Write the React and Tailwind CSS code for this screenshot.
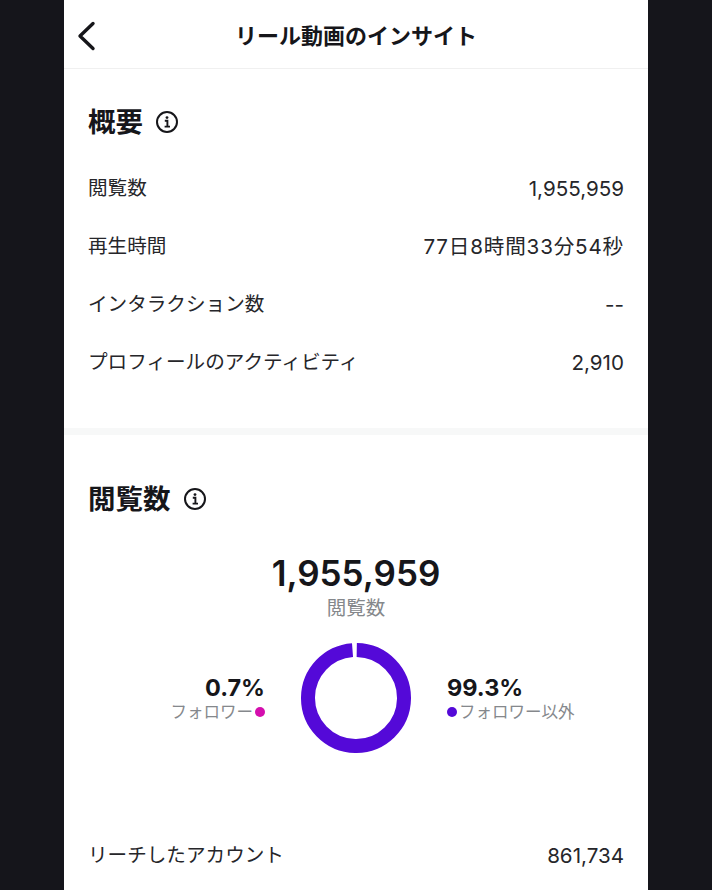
const OVERVIEW_ROWS = [
  ['閲覧数', '1,955,959', ''],
  ['再生時間', '77日8時間33分54秒', 'tracking-[0.04em]'],
  ['インタラクション数', '--', ''],
  ['プロフィールのアクティビティ', '2,910', ''],
];

function InfoIcon() {
  return (
    <svg width="24" height="24" viewBox="0 0 24 24" fill="none" stroke="#16161a" className="shrink-0">
      <circle cx="12" cy="12" r="10" strokeWidth="2" />
      <circle cx="12" cy="7.6" r="1.4" fill="#16161a" stroke="none" />
      <path d="M9.8 10.8H12.4V16.4M9.6 16.6H15" strokeWidth="1.9" />
    </svg>
  );
}

function Donut() {
  // 円周 = 2 * PI * 48 = 301.6, leaves a small gap at the top
  return (
    <svg width="110" height="110" viewBox="0 0 110 110" className="block">
      <circle
        cx="55"
        cy="55"
        r="48"
        fill="none"
        stroke="#5409d8"
        strokeWidth="14"
        strokeDasharray="296.8 4.8"
        transform="rotate(-89.1 55 55)"
      />
    </svg>
  );
}

export default function App() {
  return (
    <div
      className="h-[890px] w-[712px] overflow-hidden bg-[#15151b] px-16 text-[#16161a]"
      style={{ fontFamily: 'Inter, "Noto Sans CJK JP", sans-serif' }}
    >
      <div className="h-full bg-white">
        {/* Header */}
        <div className="relative flex h-[69px] items-center justify-center border-b border-[#f0f0f0]">
          <svg width="22" height="32" viewBox="0 0 22 32" fill="none" className="absolute left-[12px] top-[20px]">
            <path d="M17 3.5L4 16L17 28.5" stroke="#16161a" strokeWidth="3.4" strokeLinecap="round" strokeLinejoin="round" />
          </svg>
          <span className="mt-[3px] text-[22px] font-bold leading-[30px]">リール動画のインサイト</span>
        </div>

        {/* 概要 */}
        <div className="h-[359px] px-6 pt-[33px]">
          <div className="flex h-10 items-center gap-[12px]">
            <h2 className="text-[27.5px] font-bold leading-10">概要</h2>
            <InfoIcon />
          </div>
          <div className="mt-[18px] flex flex-col">
            {OVERVIEW_ROWS.map(([label, value, extra]) => (
              <div key={label} className="flex h-[58px] items-center justify-between text-[#26262a]">
                <span className="text-[19.6px]">{label}</span>
                <span className={`text-[20.6px] ${extra}`}>{value}</span>
              </div>
            ))}
          </div>
        </div>
        <div className="h-[7px] bg-[#f7f8f8]" />

        {/* 閲覧数 */}
        <div className="px-6 pt-[44px]">
          <div className="flex h-10 items-center gap-[12px]">
            <h2 className="text-[27.5px] font-bold leading-10">閲覧数</h2>
            <InfoIcon />
          </div>
          <div className="mt-[34px] flex flex-col items-center">
            <div className="text-[35px] font-semibold leading-10">1,955,959</div>
            <div className="mt-[2px] text-[19.5px] leading-[26px] text-[#85888c]">閲覧数</div>
          </div>
          <div className="mt-[22px] grid grid-cols-[1fr_auto_1fr] items-center gap-9">
            <div className="flex flex-col items-end">
              <div className="text-[23.5px] font-bold leading-7">0.7%</div>
              <div className="flex items-center gap-[2px] text-[16.5px] leading-5 text-[#85888c]">
                フォロワー
                <span className="h-2.5 w-2.5 rounded-full bg-[#d40fae]" />
              </div>
            </div>
            <Donut />
            <div className="flex flex-col items-start">
              <div className="text-[23.5px] font-bold leading-7">99.3%</div>
              <div className="flex items-center gap-[2px] text-[16.5px] leading-5 text-[#85888c]">
                <span className="h-2.5 w-2.5 rounded-full bg-[#5409d8]" />
                フォロワー以外
              </div>
            </div>
          </div>
          <div className="mt-[74px] flex h-[58px] items-center justify-between text-[#26262a]">
            <span className="text-[19.6px]">リーチしたアカウント</span>
            <span className="text-[20.6px]">861,734</span>
          </div>
        </div>
      </div>
    </div>
  );
}
